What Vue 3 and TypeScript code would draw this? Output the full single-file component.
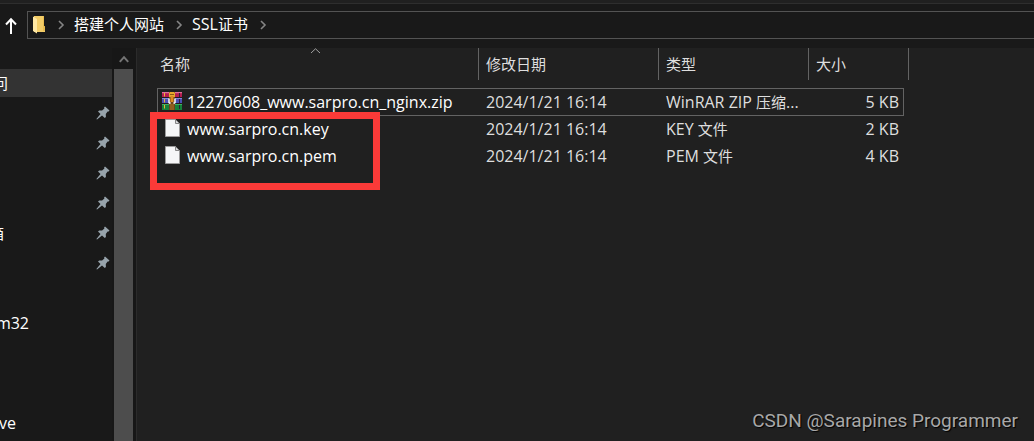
<script setup lang="ts">
interface NavItem {
  text: string
  end?: string
  pinned?: boolean
  selected?: boolean
  group?: boolean
}

interface FileRow {
  name: string
  date: string
  kind: string
  kindCjk: string
  more: string
  size: string
  archive: boolean
}

const crumbs = [
  { latin: '', cjk: '搭建个人网站' },
  { latin: 'SSL', cjk: '证书' },
]

const navItems: NavItem[] = [
  { text: '问', end: 'end-s', selected: true },
  { text: '', pinned: true },
  { text: '', pinned: true },
  { text: '', pinned: true },
  { text: '', pinned: true },
  { text: '箱', end: 'end-xs', pinned: true },
  { text: '', pinned: true },
  { text: '' },
  { text: 'm32', end: 'end-l' },
  { text: '' },
  { text: '' },
  { text: 've', end: 'end-m', group: true },
]

const files: FileRow[] = [
  { name: '12270608_www.sarpro.cn_nginx.zip', date: '2024/1/21 16:14', kind: 'WinRAR ZIP ', kindCjk: '压缩', more: '...', size: '5 KB', archive: true },
  { name: 'www.sarpro.cn.key', date: '2024/1/21 16:14', kind: 'KEY ', kindCjk: '文件', more: '', size: '2 KB', archive: false },
  { name: 'www.sarpro.cn.pem', date: '2024/1/21 16:14', kind: 'PEM ', kindCjk: '文件', more: '', size: '4 KB', archive: false },
]
</script>

<template>
  <div class="explorer">
    <header class="toolbar">
      <button class="up" type="button" aria-label="Up">
        <svg width="14" height="18" viewBox="0 0 14 18">
          <path d="M7 17V2.5M2 7.5L7 2.3L12 7.5" fill="none" stroke="#fff" stroke-width="2" />
        </svg>
      </button>
      <nav class="address" aria-label="Path">
        <svg class="folder" width="14" height="18" viewBox="0 0 14 18">
          <path d="M2 0H11.5V9.5L13 10.5V16H2Z" fill="#f3cd68" />
          <path d="M11 0H12V10L13 11V15H11Z" fill="#e9bd50" />
          <path d="M1 0.5L5 3V17.5L1 15Z" fill="#ffe8a4" />
        </svg>
        <svg class="chevron" width="7" height="10" viewBox="0 0 7 10">
          <path d="M1 1L5 5L1 9" fill="none" stroke="#858585" stroke-width="1.6" />
        </svg>
        <template v-for="crumb in crumbs" :key="crumb.cjk">
          <a class="crumb" href="#"><span class="latin">{{ crumb.latin }}</span>{{ crumb.cjk }}</a>
          <svg class="chevron" width="7" height="10" viewBox="0 0 7 10">
            <path d="M1 1L5 5L1 9" fill="none" stroke="#858585" stroke-width="1.6" />
          </svg>
        </template>
      </nav>
    </header>

    <div class="body">
      <aside class="sidebar">
        <ul class="nav">
          <li v-for="(item, i) in navItems" :key="i" class="nav-item" :class="{ selected: item.selected, group: item.group }">
            <span class="nav-text" :class="item.end">{{ item.text }}</span>
            <svg v-if="item.pinned" width="14" height="14" viewBox="0 0 14 14">
              <path d="M9 0.5L13.5 4.5L12.2 5.7L11.6 5.6L9.8 8L9.9 11L8.8 12L6 9.4L1 13.6L0.4 13L4.5 8L2 5.4L3.2 4.4L6.1 4.4L8.4 2.4L8.1 1.6Z" fill="#98a4ac" />
            </svg>
          </li>
        </ul>
        <div class="scrollbar">
          <button class="scroll-up" type="button" aria-label="Scroll up">
            <svg width="10" height="8" viewBox="0 0 10 8">
              <path d="M0.8 6.8L5 2.2L9.2 6.8" fill="none" stroke="#747474" stroke-width="2" />
            </svg>
          </button>
          <div class="thumb"></div>
        </div>
      </aside>

      <main class="content">
        <table class="files">
          <colgroup>
            <col class="c-name" />
            <col class="c-date" />
            <col class="c-kind" />
            <col class="c-size" />
          </colgroup>
          <thead>
            <tr>
              <th class="first">
                名称
                <svg class="sort" width="11" height="6" viewBox="0 0 11 6">
                  <path d="M1 5L5.5 0.8L10 5" fill="none" stroke="#a0a0a0" />
                </svg>
              </th>
              <th>修改日期</th>
              <th>类型</th>
              <th class="last">大小</th>
            </tr>
          </thead>
          <tbody>
            <tr v-for="file in files" :key="file.name" :class="{ focused: file.archive }">
              <td class="name">
                <div class="name-box">
                  <span class="icon">
                    <svg v-if="file.archive" width="21" height="18" viewBox="0 0 21 18">
                      <path d="M0 0H20V5H0Z" fill="#b51d50" />
                      <path d="M0 0H20V1.2H0Z" fill="#e0709a" />
                      <path d="M0 6H20V11H0Z" fill="#4b50b4" />
                      <path d="M0 6H20V7H0Z" fill="#8388d8" />
                      <path d="M0 12H20V18H0Z" fill="#16803a" />
                      <path d="M0 12H20V13H0Z" fill="#3caf62" />
                      <path d="M0 5H20V6H0ZM0 11H20V12H0Z" fill="#241a22" />
                      <path d="M2.5 1V4.5M2.5 7V10.5M2.5 13V16.5" stroke="#e9b535" />
                      <path d="M17.5 1V5M17.5 7V11M17.5 13V17" stroke="#321c3c" />
                      <path d="M7 0H13V18H7Z" fill="#6e431b" />
                      <path d="M7 1L8 0H12L13 1V5H7Z" fill="#e7a92e" />
                      <path d="M8 2.5H12" stroke="#8a5a18" />
                      <path d="M7 6.5V10.5L8.5 11.5M13 6.5V10.5L11.5 11.5" fill="none" stroke="#eee" stroke-width="1.6" />
                      <path d="M8.5 4H11.5V10H8.5Z" fill="#de8c22" />
                      <path d="M8 13H12M8 15H12M8 17H12" stroke="#b27a24" />
                    </svg>
                    <svg v-else width="15" height="18" viewBox="0 0 15 18">
                      <path d="M0.5 0.5H10.5L14.5 4.5V17.5H0.5Z" fill="#f5f6f7" stroke="#9c9c9c" />
                      <path d="M10.5 0.5V4.5H14.5Z" fill="#d8dadc" stroke="#858585" />
                    </svg>
                  </span>
                  <span>{{ file.name }}</span>
                </div>
              </td>
              <td>{{ file.date }}</td>
              <td>{{ file.kind }}<span class="cjk">{{ file.kindCjk }}</span>{{ file.more }}</td>
              <td class="size">{{ file.size }}</td>
            </tr>
          </tbody>
        </table>
      </main>
    </div>

    <div class="highlight"></div>
    <div class="watermark">CSDN @Sarapines Programmer</div>
  </div>
</template>

<style>
body {
  margin: 0;
  background: #202020;
}
</style>

<style scoped>
.explorer {
  position: relative;
  display: flex;
  flex-direction: column;
  height: 100vh;
  overflow: hidden;
  box-sizing: border-box;
  border-top: 3px solid #202020;
  background: #202020;
  color: #fff;
  font-family: "Open Sans", "Noto Sans CJK SC", sans-serif;
  font-size: 16px;
  line-height: 20px;
}

button {
  padding: 0;
  border: 0;
  background: none;
}

svg {
  display: block;
  flex: none;
}

.toolbar {
  display: flex;
  flex: none;
  box-sizing: border-box;
  height: 45px;
  padding: 7px 0 9px 4px;
  border-top: 1px solid #2e2e2e;
  background: #191919;
}

.up {
  display: flex;
  align-items: center;
  width: 23px;
  height: 30px;
}

.address {
  display: flex;
  flex: 1;
  align-items: center;
  box-sizing: border-box;
  height: 28px;
  padding-left: 4px;
  border: 1px solid #535353;
  border-right: 0;
}

.chevron {
  margin: 0 9px 0 12px;
}

.crumb {
  padding-bottom: 2px;
  color: #fff;
  font-size: 15px;
  text-decoration: none;
  white-space: nowrap;
}

.latin {
  font-size: 16px;
}

.body {
  display: flex;
  flex: 1;
  min-height: 0;
}

.sidebar {
  display: flex;
  flex: none;
  width: 136px;
  border-right: 1px solid #2b2b2b;
  background: #191919;
}

.nav {
  width: 112px;
  margin: 0;
  padding: 20px 0 0;
  list-style: none;
}

.nav-item {
  display: flex;
  align-items: center;
  justify-content: space-between;
  box-sizing: border-box;
  height: 30px;
  padding-right: 2px;
}

.selected {
  height: 28px;
  margin: 1px 0;
  background: #333;
}

.group {
  margin-top: 10px;
}

.nav-text {
  display: flex;
  justify-content: flex-end;
}

.end-xs {
  width: 4px;
  font-size: 15px;
}

.end-s {
  width: 8px;
  font-size: 15px;
}

.end-m {
  width: 16px;
}

.end-l {
  width: 29px;
}

.scrollbar {
  display: flex;
  flex-direction: column;
  width: 19px;
  padding: 0 3px 0 2px;
  background: #171717;
}

.scroll-up {
  display: flex;
  align-items: center;
  justify-content: center;
  height: 21px;
}

.thumb {
  flex: 1;
  background: #4d4d4d;
}

.content {
  flex: 1;
  min-width: 0;
  padding-left: 20px;
}

.files {
  width: 747px;
  table-layout: fixed;
  border-collapse: separate;
  border-spacing: 0;
}

.c-name {
  width: 322px;
}

.c-date {
  width: 180px;
}

.c-kind {
  width: 150px;
}

.files th {
  position: relative;
  box-sizing: border-box;
  height: 32px;
  padding: 0 0 0 7px;
  border-right: 1px solid #636363;
  color: #dedede;
  font-size: 15px;
  font-weight: 400;
  text-align: left;
}

.files .first {
  padding-left: 3px;
}

.files .last {
  border-right: 0;
}

.last::after {
  content: "";
  position: absolute;
  top: 0;
  right: -5px;
  bottom: 0;
  border-right: 1px solid #636363;
}

.sort {
  position: absolute;
  top: 0;
  left: 153px;
}

tbody::before {
  content: "";
  display: block;
  height: 8px;
}

.files td {
  box-sizing: border-box;
  height: 27px;
  padding: 0 0 2px 7px;
  color: #dedede;
  white-space: nowrap;
}

.files .focused td {
  height: 28px;
  padding-bottom: 0;
  border-top: 1px solid #636363;
  border-bottom: 1px solid #636363;
}

.focused td:first-child {
  border-left: 1px solid #636363;
}

.focused td:last-child {
  border-right: 1px solid #636363;
}

.files .name {
  padding-left: 4px;
  color: #fff;
}

.files .name-box {
  display: flex;
  align-items: center;
}

.icon {
  display: flex;
  justify-content: center;
  width: 22px;
  margin-right: 4px;
  padding-bottom: 2px;
}

.files .size {
  padding-right: 5px;
  text-align: right;
}

.files .focused .name {
  padding-left: 3px;
}

.files .focused .size {
  padding-right: 4px;
}

.cjk {
  font-size: 15px;
}

.highlight {
  position: absolute;
  top: 109px;
  left: 150px;
  box-sizing: border-box;
  width: 230px;
  height: 78px;
  border: 7px solid #fb3a38;
}

.watermark {
  position: absolute;
  right: 16px;
  bottom: 8px;
  color: #a8a8a8;
  font-family: Roboto, sans-serif;
  font-size: 19px;
  line-height: 24px;
  text-shadow: 1px 1px 1px #000;
}
</style>
